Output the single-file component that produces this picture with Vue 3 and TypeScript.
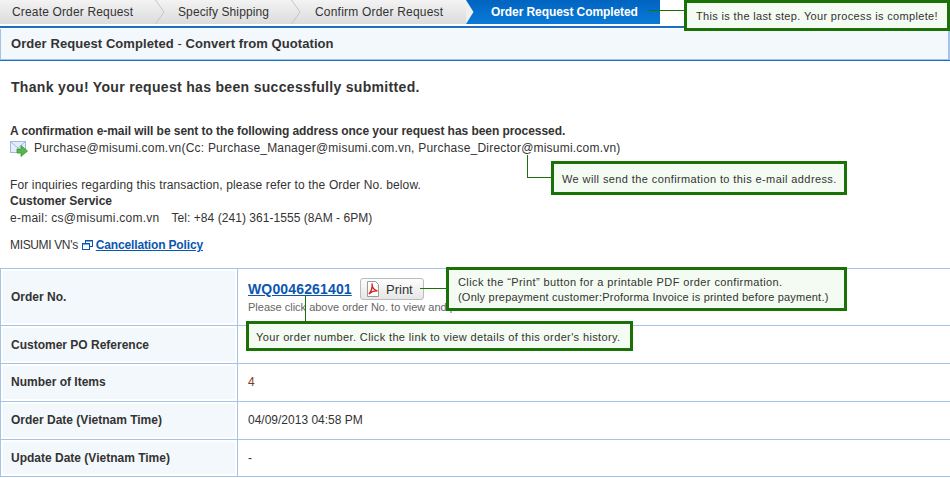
<script setup lang="ts">
const rows = [
  { label: 'Customer PO Reference', value: '' },
  { label: 'Number of Items', value: '4' },
  { label: 'Order Date (Vietnam Time)', value: '04/09/2013 04:58 PM' },
  { label: 'Update Date (Vietnam Time)', value: '-' },
]
</script>

<template>
  <div class="page">
    <nav class="steps">
      <div class="step s1">Create Order Request</div>
      <svg class="chev c1" width="10" height="24" viewBox="0 0 10 24"><path d="M0.5 0 L9 12 L0.5 24" fill="none" stroke="#c4c4c4" /></svg>
      <div class="step s2">Specify Shipping</div>
      <svg class="chev c2" width="10" height="24" viewBox="0 0 10 24"><path d="M0.5 0 L9 12 L0.5 24" fill="none" stroke="#c4c4c4" /></svg>
      <div class="step s3">Confirm Order Request</div>
      <div class="step active">
        <svg class="chev-on" width="8" height="24" viewBox="0 0 8 24"><path d="M0 0 L7.5 12 L0 24 Z" fill="#efefef" /></svg>
        <span>Order Request Completed</span>
      </div>
    </nav>

    <header class="title">
      <div class="title-in"><b>Order Request Completed</b> <span class="sep">-</span> <b>Convert from Quotation</b></div>
    </header>

    <h1 class="thanks">Thank you! Your request has been successfully submitted.</h1>

    <p class="strong conf">A confirmation e-mail will be sent to the following address once your request has been processed.</p>
    <p class="mail">
      <svg class="mail-ico" width="18" height="16" viewBox="0 0 18 16">
        <rect x="0.5" y="0.5" width="15" height="11" fill="#e4eefa" stroke="#9dbce4" />
        <path d="M1 1 L8 7 L15 1" fill="none" stroke="#9dbce4" />
        <path d="M7 8 H11 V4.5 L17.5 10 L11 15.5 V12 H7 Z" fill="#55b84a" stroke="#2f8a2a" stroke-width="0.7" />
      </svg>
      <span>Purchase@misumi.com.vn(Cc: Purchase_Manager@misumi.com.vn, Purchase_Director@misumi.com.vn)</span>
    </p>

    <p class="inq">For inquiries regarding this transaction, please refer to the Order No. below.</p>
    <p class="strong line">Customer Service</p>
    <p class="line contact"><span class="cs">e-mail: cs@misumi.com.vn</span><span class="tel">Tel: +84 (241) 361-1555 (8AM - 6PM)</span></p>
    <p class="cancel">
      <span class="vn">MISUMI VN's</span>
      <svg class="win-ico" width="11" height="10" viewBox="0 0 11 10">
        <rect x="3.5" y="0.5" width="7" height="6" fill="none" stroke="#0b57b0" />
        <rect x="0.5" y="3.5" width="7" height="6" fill="#fff" stroke="#0b57b0" />
        <path d="M0 4 H8 M3 1 H11" stroke="#0b57b0" />
      </svg>
      <a class="link">Cancellation Policy</a>
    </p>

    <section class="table">
      <div class="row first">
        <div class="th"><span>Order No.</span></div>
        <div class="td">
          <div class="order-line">
            <a class="order-link">WQ0046261401</a>
            <button class="print" type="button">
              <svg width="12" height="16" viewBox="0 0 12 16">
                <path d="M0.5 0.5 H8.5 L11.5 3.5 V15.5 H0.5 Z" fill="#fff" stroke="#9a9a9a" />
                <path d="M1.8 13 C4 11 6 6 5 2.5 C4.8 6 7 9.5 10.5 10 C7 9.5 4 11 1.8 13 Z" fill="none" stroke="#d8201c" stroke-width="1.4" />
              </svg>
              <span>Print</span>
            </button>
          </div>
          <div class="hint">Please click above order No. to view and print its details.</div>
        </div>
      </div>
      <div v-for="r in rows" :key="r.label" class="row">
        <div class="th"><span>{{ r.label }}</span></div>
        <div class="td val">{{ r.value }}</div>
      </div>
    </section>

    <!-- leader lines and callouts lying over the page -->
    <i class="lead l1"></i>
    <div class="note n1">This is the last step. Your process is complete!</div>
    <i class="lead l2a"></i><i class="lead l2b"></i>
    <div class="note n2">We will send the confirmation to this e-mail address.</div>
    <i class="lead l3"></i>
    <div class="note n3">Click the “Print” button for a printable PDF order confirmation.<br /><span class="tight">(Only prepayment customer:Proforma Invoice is printed before payment.)</span></div>
    <i class="lead l4"></i>
    <div class="note n4">Your order number. Click the link to view details of this order's history.</div>
  </div>
</template>

<style>
html, body { margin: 0; background: #fff; }
</style>

<style scoped>
.page {
  position: relative;
  width: 950px;
  height: 478px;
  overflow: hidden;
  font: 12px/17px "Liberation Sans", Arial, sans-serif;
  color: #333;
}
p, h1 { margin: 0; }
.steps {
  display: flex;
  width: 660px;
  height: 24px;
  background: linear-gradient(#f3f3f3, #dcdcdc);
}
.step { line-height: 24px; white-space: nowrap; box-sizing: border-box; letter-spacing: 0.16px; }
.chev { flex: none; }
.s1 { padding-left: 12px; width: 155px; }
.c1 { margin-right: 13px; }
.s2 { width: 113px; letter-spacing: 0.1px; }
.c2 { margin-right: 14px; }
.s3 { width: 151px; letter-spacing: 0.2px; }
.active {
  flex: 1;
  display: flex;
  background: linear-gradient(#0064c0, #0a7ad8);
  color: #fff;
  font-weight: bold;
  letter-spacing: -0.08px;
}
.chev-on { flex: none; }
.active span { margin-left: 17px; }
.title {
  margin-top: 2px;
  height: 35px;
  box-sizing: border-box;
  border-top: 2px solid #1b6fc2;
  border-bottom: 2px solid #1b6fc2;
  background: #fff;
}
.title-in {
  height: 31px;
  box-sizing: border-box;
  margin-top: 1px;
  padding-left: 10px;
  background: #f3f8fc;
  border-left: 1px solid #a3c4e6;
  border-right: 2px solid #a3c4e6;
  border-bottom: 1px solid #a3c4e6;
  line-height: 30px;
  font-size: 13px;
  letter-spacing: 0.07px;
}
.title-in b { color: #333; }
.sep { color: #333; }
.thanks {
  margin: 17px 0 0 11px;
  font-size: 14px;
  line-height: 18px;
  font-weight: bold;
  letter-spacing: 0.32px;
  color: #333;
}
.strong { font-weight: bold; }
.conf { margin: 27px 0 0 10px; line-height: 16px; letter-spacing: -0.06px; }
.mail { display: flex; align-items: center; height: 17px; margin: 1px 0 0 10px; letter-spacing: 0.21px; }
.mail-ico { flex: none; margin-right: 6px; }
.inq { margin: 20px 0 0 10px; line-height: 16px; letter-spacing: 0.13px; }
.line { margin-left: 10px; }
.cs { letter-spacing: 0.25px; }
.tel { margin-left: 12px; letter-spacing: 0.05px; }
.cancel { margin: 10px 0 0 10px; }
.vn { letter-spacing: -0.35px; }
.win-ico { vertical-align: -1px; margin: 0 3px 0 4px; }
.link { color: #0b57b0; font-weight: bold; text-decoration: underline; letter-spacing: -0.15px; }
.table {
  margin-top: 14px;
  border-top: 1px solid #a3c4e6;
}
.row {
  display: flex;
  height: 37px;
  border-bottom: 1px solid #a3c4e6;
}
.first { height: 56px; }
.row:last-child { height: 36px; }
.th {
  flex: none;
  width: 238px;
  box-sizing: border-box;
  padding: 2px;
  border-left: 1px solid #a3c4e6;
  border-right: 1px solid #a3c4e6;
  font-weight: bold;
}
.th span {
  display: flex;
  align-items: center;
  height: 100%;
  padding-left: 8px;
  background: #f3f8fc;
}
.row:nth-child(2) .th span { padding-top: 2px; box-sizing: border-box; }
.td { padding-left: 10px; flex: 1; }
.val { line-height: 37px; }
.row:nth-child(3) .val { color: #7a3a28; }
.order-line { display: flex; align-items: center; height: 24px; margin-top: 8px; }
.order-link { font-size: 14px; font-weight: bold; color: #0b57b0; text-decoration: underline; width: 112px; letter-spacing: 0.15px; }
.print {
  display: flex;
  align-items: center;
  gap: 7px;
  width: 64px;
  height: 22px;
  padding: 0 0 0 6px;
  box-sizing: border-box;
  border: 1px solid #bbb;
  border-radius: 3px;
  background: linear-gradient(#fdfdfd, #e6e6e6);
  font: 13px "Liberation Sans", Arial, sans-serif;
  color: #333;
}
.hint { font-size: 11px; line-height: 13px; color: #666; white-space: nowrap; }
.note {
  position: absolute;
  box-sizing: border-box;
  border: 3px solid #1a7207;
  background: #f4fbf2;
  color: #333;
  font: 11px/15px "Liberation Sans", sans-serif;
  letter-spacing: 0.4px;
  padding-left: 9px;
  white-space: nowrap;
}
.n1 { left: 684px; top: 0; width: 266px; height: 31px; line-height: 27px; letter-spacing: 0.34px; }
.n2 { left: 551px; top: 161px; width: 296px; height: 34px; line-height: 30px; padding-left: 8px; }
.n3 { left: 446px; top: 267px; width: 401px; height: 44px; padding-top: 5px; }
.tight { letter-spacing: 0.21px; }
.n4 { left: 246px; top: 321px; width: 387px; height: 30px; line-height: 26px; padding-left: 7px; letter-spacing: 0.37px; }
.lead { position: absolute; background: #1a7207; display: block; }
.l1 { left: 649px; top: 10px; width: 36px; height: 1px; }
.l2a { left: 527px; top: 155px; width: 1px; height: 23px; }
.l2b { left: 527px; top: 177px; width: 25px; height: 1px; }
.l3 { left: 420px; top: 288px; width: 27px; height: 1px; }
.l4 { left: 305px; top: 296px; width: 1px; height: 26px; }
</style>
